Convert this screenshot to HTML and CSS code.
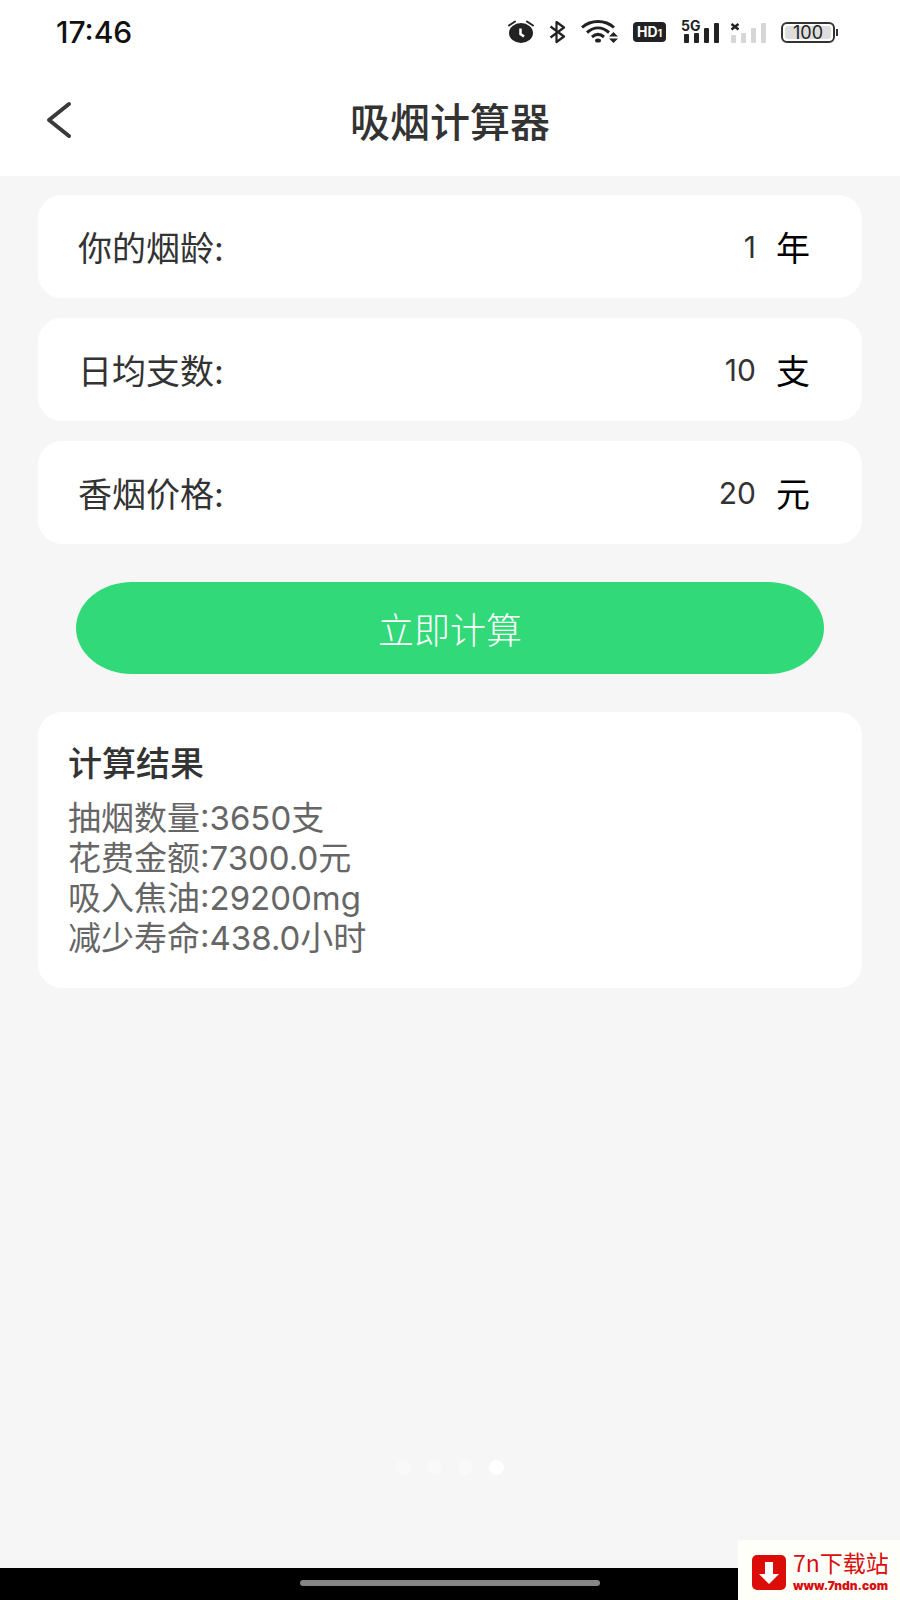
FILE: index.html
```html
<!DOCTYPE html>
<html lang="zh-Hans">
<head>
    <meta charset="UTF-8">
    <meta name="viewport" content="width=device-width, initial-scale=1.0">
    <title>吸烟计算器</title>
    <link rel="stylesheet" href="styles.css">
</head>
<body>
    <div class="page">
        <div class="status">
            <span class="time">17:46</span>
            <div class="icons">
                <!-- alarm -->
                <svg width="26" height="24" viewBox="0 0 26 24">
                    <ellipse cx="13" cy="13" rx="12" ry="10" fill="#222"/>
                    <path d="M1 5.5 7 1.5M25 5.5 19 1.5" stroke="#222" stroke-width="2" stroke-linecap="round"/>
                    <path d="M12.5 8.500v5.500l3.500 2.500" fill="none" stroke="#fff" stroke-width="2.500"/>
                </svg>
                <!-- bluetooth -->
                <svg width="17" height="24" viewBox="0 0 17 24">
                    <path d="M1.500 6.500 15 16.500 7.500 22V2L15 7.500 1.500 17.500" fill="none" stroke="#222" stroke-width="2.200" stroke-linejoin="round"/>
                </svg>
                <!-- wifi -->
                <svg width="37" height="24" viewBox="0 0 37 24">
                    <g fill="none" stroke="#222" stroke-width="3">
                        <path d="M1 7.500C10-.5 24-.5 33 7.500"/>
                        <path d="M6 12.500C13 6.500 21 6.500 28 12.500"/>
                        <path d="M11 17C15 13.500 19 13.500 23 17"/>
                    </g>
                    <ellipse cx="17" cy="20.500" rx="3" ry="2" fill="#222"/>
                    <path d="M28 16.500 32.500 12 37 16.500zM28 18.500 32.500 23 37 18.500z" fill="#222"/>
                </svg>
                <span class="hd">HD<small>1</small></span>
                <div class="signals">
                    <!-- 5G signal -->
                    <div class="signal">
                        <span class="net">5G</span>
                        <svg width="39" height="24" viewBox="0 0 39 24">
                            <g fill="#222">
                                <rect x="3" y="14" width="5" height="9" rx="1"/>
                                <rect x="13" y="13" width="5" height="10" rx="1"/>
                                <rect x="23" y="8" width="5" height="15" rx="1"/>
                                <rect x="33" y="3" width="5" height="20" rx="1"/>
                            </g>
                        </svg>
                    </div>
                    <!-- no signal -->
                    <svg width="36" height="24" viewBox="0 0 36 24">
                        <path d="M1.500 4 8.500 9.500M8.500 4 1.500 9.500" stroke="#222" stroke-width="2.500"/>
                        <g fill="#d6d6d6">
                            <rect x="1" y="15" width="5" height="8" rx="1"/>
                            <rect x="11" y="13" width="5" height="10" rx="1"/>
                            <rect x="21" y="8" width="5" height="15" rx="1"/>
                            <rect x="31" y="3" width="5" height="20" rx="1"/>
                        </g>
                    </svg>
                </div>
                <span class="battery"><span>100</span></span>
            </div>
        </div>

        <header class="header">
            <button class="back" type="button" aria-label="返回">
                <svg width="26" height="38" viewBox="0 0 26 38">
                    <path d="M23 3 3 19 23 35" fill="none" stroke="#3a3a3a" stroke-width="4" stroke-linecap="round" stroke-linejoin="round"/>
                </svg>
            </button>
            <h1>吸烟计算器</h1>
        </header>

        <main class="main">
            <form class="form">
                <div class="row">
                    <label for="years">你的烟龄:</label>
                    <input id="years" type="text" inputmode="numeric" value="1">
                    <span class="unit">年</span>
                </div>
                <div class="row">
                    <label for="count">日均支数:</label>
                    <input id="count" type="text" inputmode="numeric" value="10">
                    <span class="unit">支</span>
                </div>
                <div class="row">
                    <label for="price">香烟价格:</label>
                    <input id="price" type="text" inputmode="numeric" value="20">
                    <span class="unit">元</span>
                </div>
                <button class="submit" type="button">立即计算</button>
            </form>

            <section class="result">
                <h2>计算结果</h2>
                <p>抽烟数量:3650支</p>
                <p>花费金额:7300.0元</p>
                <p>吸入焦油:29200mg</p>
                <p>减少寿命:438.0小时</p>
            </section>

            <div class="dots">
                <i></i><i></i><i></i><i class="active"></i>
            </div>
        </main>

        <div class="navbar"><div class="bar"></div></div>

        <div class="site">
            <svg width="34" height="35" viewBox="0 0 34 35">
                <rect width="34" height="35" rx="5" fill="#dc0d08"/>
                <path d="M13 7h8v12h6L17 29 7 19h6z" fill="#fff"/>
            </svg>
            <div class="site-text">
                <span class="site-name">7n下载站</span>
                <span class="site-url">www.7ndn.com</span>
            </div>
        </div>
    </div>
</body>
</html>
```
FILE: styles.css
```css
* {
    box-sizing: border-box;
}
body {
    margin: 0;
    background: #f6f6f6;
    color: #333;
    font-family: Inter, "Noto Sans CJK SC", sans-serif;
    font-size: 34px;
}
h1, h2, p {
    margin: 0;
}
button {
    border: 0;
    padding: 0;
    font-family: inherit;
    cursor: pointer;
}
svg {
    display: block;
}
.page {
    position: relative;
    display: flex;
    flex-direction: column;
    min-height: 100vh;
}

/* status bar */
.status {
    display: flex;
    align-items: center;
    justify-content: space-between;
    height: 64px;
    padding: 0 62px 0 56px;
    background: #fff;
}
.time {
    color: #111;
    font-size: 30px;
    font-weight: 500;
}
.icons {
    display: flex;
    align-items: center;
    gap: 15px;
}
.hd {
    width: 33px;
    height: 20px;
    border-radius: 4px;
    background: #222;
    color: #fff;
    font-size: 14px;
    font-weight: 700;
    line-height: 20px;
    text-align: center;
}
.hd small {
    font-size: 10px;
}
.signals {
    display: flex;
    gap: 10px;
}
.signal {
    position: relative;
}
.net {
    position: absolute;
    top: -2px;
    left: 0;
    color: #222;
    font-size: 14px;
    font-weight: 700;
    line-height: 16px;
}
.battery {
    position: relative;
    width: 54px;
    height: 21px;
    margin-right: 3px;
    padding: 2px;
    border: 2px solid #333;
    border-radius: 6px;
    color: #222;
    font-size: 18px;
    line-height: 13px;
    text-align: center;
}
.battery span {
    display: block;
    border-radius: 3px;
    background: #ddd;
}
.battery::after {
    content: "";
    position: absolute;
    top: 5px;
    right: -5px;
    width: 2px;
    height: 7px;
    background: #333;
}

/* title bar */
.header {
    display: grid;
    grid-template-columns: 80px 1fr 80px;
    align-items: center;
    height: 112px;
    background: #fff;
}
.back {
    justify-self: end;
    width: 34px;
    background: none;
}
.header h1 {
    padding-top: 6px;
    font-size: 40px;
    font-weight: 500;
    line-height: 60px;
    text-align: center;
}

.main {
    flex: 1;
    display: flex;
    flex-direction: column;
    padding: 19px 38px 93px;
}
.form {
    display: flex;
    flex-direction: column;
    gap: 20px;
}
.row {
    display: flex;
    align-items: center;
    height: 103px;
    padding: 0 52px 0 40px;
    border-radius: 24px;
    background: #fff;
}
.row input {
    flex: 1;
    min-width: 0;
    margin-right: 20px;
    padding: 0;
    border: 0;
    outline: 0;
    background: none;
    color: #333;
    font-family: inherit;
    font-size: 30px;
    text-align: right;
}
.unit {
    color: #000;
}
.submit {
    height: 92px;
    margin: 18px 38px 38px;
    border-radius: 56px / 46px;
    background: #31d978;
    color: #fff;
    font-size: 36px;
    font-weight: 300;
}

.result {
    padding: 30px;
    border-radius: 24px;
    background: #fff;
}
.result h2 {
    margin-bottom: 12px;
    font-size: 34px;
    font-weight: 500;
    line-height: 44px;
}
.result p {
    color: #666;
    font-size: 33px;
    line-height: 40px;
}

.dots {
    display: flex;
    justify-content: center;
    gap: 16px;
    margin-top: auto;
}
.dots i {
    width: 15px;
    height: 15px;
    border-radius: 50%;
    background: #f9f9f9;
}
.dots .active {
    background: #fff;
}

.navbar {
    height: 32px;
    padding-top: 12px;
    background: #000;
}
.bar {
    width: 33.333%;
    height: 6px;
    margin: 0 auto;
    border-radius: 3px;
    background: #868686;
}

/* site mark over the bottom corner */
.site {
    position: absolute;
    right: 0;
    bottom: 0;
    display: flex;
    align-items: center;
    gap: 7px;
    width: 162px;
    height: 60px;
    padding: 5px 0 0 14px;
    background: #fffffa;
    color: #d80f0f;
}
.site-text {
    display: flex;
    flex-direction: column;
    padding-bottom: 5px;
}
.site-name {
    font-family: "Noto Sans CJK SC", sans-serif;
    font-size: 23px;
    line-height: 32px;
}
.site-url {
    font-size: 12px;
    font-weight: 900;
    line-height: 16px;
}
```
